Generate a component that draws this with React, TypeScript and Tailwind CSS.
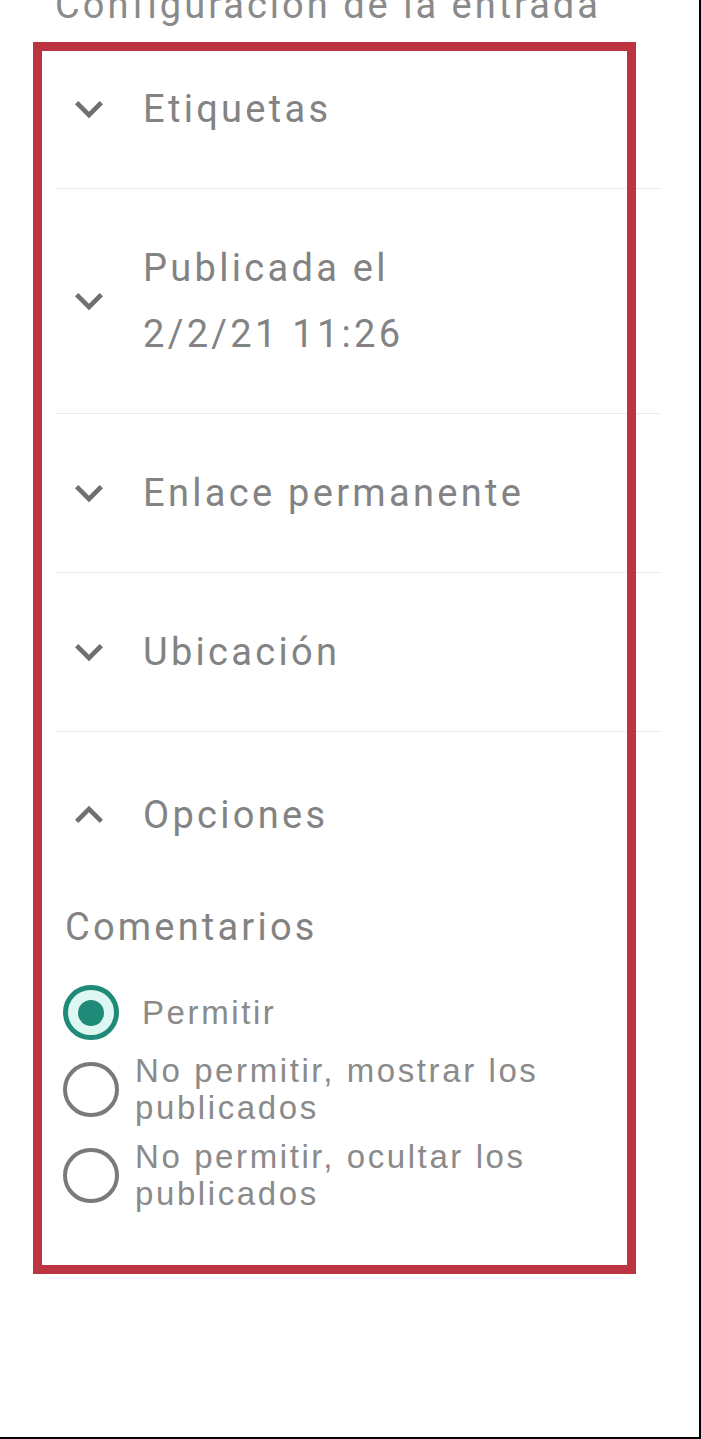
import React from "react";

const ExpandIcon = ({ up = false }: { up?: boolean }) => (
  <svg
    viewBox="0 0 24 24"
    className={`w-[56px] h-[56px] shrink-0 fill-[#6f6f6f] ${up ? "rotate-180" : ""}`}
  >
    <path d="M7.41 8.59 12 13.17l4.59-4.58L18 10l-6 6-6-6z" />
  </svg>
);

const Radio = ({ checked }: { checked?: boolean }) =>
  checked ? (
    <span className="w-[56px] h-[55px] shrink-0 rounded-full border-[5px] border-[#1f8a78] bg-[#dff7f2] flex items-center justify-center">
      <span className="w-[26px] h-[26px] rounded-full bg-[#1f8a78]" />
    </span>
  ) : (
    <span className="w-[56px] h-[55px] shrink-0 rounded-full border-[4px] border-[#7a7a7a]" />
  );

const sections = [
  { label: ["Etiquetas"] },
  { label: ["Publicada el", "2/2/21 11:26"] },
  { label: ["Enlace permanente"] },
  { label: ["Ubicación"] },
];

export default function App() {
  return (
    <div className="relative w-[701px] h-[1439px] bg-white overflow-hidden border-r-2 border-b-2 border-black font-['Roboto',sans-serif] text-[#838383]">
      <div className="ml-[55px] w-[605px]">
        {/* Title, cut off at the top */}
        <div className="flex h-[30px]">
          <div className="-mt-[14px] text-[38px] leading-[38px] tracking-[3px] text-[#8a8a8a] whitespace-nowrap">
            Configuración de la entrada
          </div>
        </div>

        {sections.map((s, i) => (
          <div
            key={i}
            className="flex items-center py-[46px] border-b border-[#ebebeb]"
          >
            <div className="ml-[6px] mr-[26px]">
              <ExpandIcon />
            </div>
            <div className="text-[38px] leading-[66px] tracking-[3.3px]">
              {s.label.map((l) => (
                <div key={l}>{l}</div>
              ))}
            </div>
          </div>
        ))}

        {/* Opciones, expanded */}
        <div className="flex items-center pt-[50px] pb-[42px]">
          <div className="ml-[6px] mr-[26px]">
            <ExpandIcon up />
          </div>
          <div className="text-[38px] leading-[66px] tracking-[3.3px]">Opciones</div>
        </div>

        <div className="ml-[10px] mt-[17px] text-[38px] leading-[40px] tracking-[3.2px]">
          Comentarios
        </div>

        <div className="ml-[8px] mt-[38px] flex flex-col gap-[12px] font-['Liberation_Sans',Arial,sans-serif] text-[33px] leading-[37px] tracking-[2.6px] text-[#8a8a8a]">
          <div className="flex items-center">
            <Radio checked />
            <span className="ml-[23px]">Permitir</span>
          </div>
          <div className="flex items-center">
            <Radio />
            <span className="ml-[16px]">
              No permitir, mostrar los
              <br />
              publicados
            </span>
          </div>
          <div className="flex items-center">
            <Radio />
            <span className="ml-[16px]">
              No permitir, ocultar los
              <br />
              publicados
            </span>
          </div>
        </div>
      </div>

      {/* Red highlight drawn over the screenshot */}
      <div className="absolute left-[33px] top-[42px] w-[603px] h-[1232px] border-[9px] border-[#bb3440] pointer-events-none" />
    </div>
  );
}
